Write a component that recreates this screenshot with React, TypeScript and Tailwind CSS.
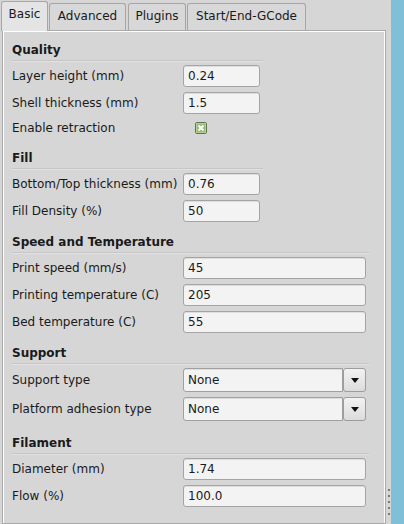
import React from "react";

function TextInput({ value, wide }: { value: string; wide?: boolean }) {
  return (
    <div
      className={`h-[22px] ${wide ? "w-[183px]" : "w-[77px]"} bg-[#f3f3f3] border border-[#a4a4a4] rounded-[3px] flex items-center pl-[4px] shadow-[inset_0_1px_0_#dedede]`}
    >
      {value}
    </div>
  );
}

function Combo({ value }: { value: string }) {
  return (
    <div className="flex h-[24px] w-[183px]">
      <div className="w-[160px] h-full bg-[#f3f3f3] border border-[#a0a0a0] rounded-l-[3px] flex items-center pl-[4px] shadow-[inset_0_1px_0_#dedede]">
        {value}
      </div>
      <div className="w-[23px] h-full border border-[#9c9c9c] rounded-[3px] bg-gradient-to-b from-[#f2f2f2] to-[#dcdcdc] flex items-center justify-center">
        <svg width="8" height="5" viewBox="0 0 8 5">
          <polygon points="0,0 8,0 4,5" fill="#111" />
        </svg>
      </div>
    </div>
  );
}

function Row({ label, children, h = "h-[22px]" }: { label: string; children: React.ReactNode; h?: string }) {
  return (
    <div className={`flex items-center ${h}`}>
      <div className="w-[171px] whitespace-nowrap">{label}</div>
      {children}
    </div>
  );
}

function Section({
  title,
  mt,
  wide,
  children,
}: {
  title: string;
  mt: string;
  wide?: boolean;
  children: React.ReactNode;
}) {
  return (
    <div className={`flex flex-col ${mt}`}>
      <div className="h-[14px] leading-[14px] font-bold">{title}</div>
      <div className={`mt-[3px] h-px bg-[#c6c6c6] shadow-[0_1px_0_#e2e2e2] ${wide ? "w-[357px]" : "w-[251px]"}`} />
      <div className="mt-[4px] flex flex-col gap-[5px]">{children}</div>
    </div>
  );
}

export default function App() {
  return (
    <div className="w-[404px] h-[524px] bg-[#d6d6d6] flex overflow-hidden font-['DejaVu_Sans',sans-serif] text-[12px] text-[#1a1a1a]">
      <div className="w-[386px] flex flex-col">
        {/* Tabs */}
        <div className="h-[30px] flex items-end pl-[1px] relative z-10">
          <div className="w-[47px] h-[30px] mb-[-1px] bg-[#e4e4e4] border border-b-0 border-[#a6a6a6] rounded-t-[3px] flex justify-center pt-[5px] leading-[14px]">
            Basic
          </div>
          <div className="ml-[1px] w-[77px] h-[27px] bg-[#d8d8d8] border border-b-0 border-[#a6a6a6] rounded-t-[3px] flex justify-center pt-[5px] leading-[14px]">
            Advanced
          </div>
          <div className="ml-[2px] w-[58px] h-[27px] bg-[#d8d8d8] border border-b-0 border-[#a6a6a6] rounded-t-[3px] flex justify-center pt-[5px] leading-[14px]">
            Plugins
          </div>
          <div className="ml-[1px] w-[119px] h-[27px] bg-[#d8d8d8] border border-b-0 border-[#a6a6a6] rounded-t-[3px] flex justify-center pt-[5px] leading-[14px]">
            Start/End-GCode
          </div>
        </div>
        {/* Panel */}
        <div className="ml-[2px] flex-1 border border-[#aaaaaa] shadow-[inset_1px_1px_0_#ffffff,inset_-1px_0_0_#ffffff] pl-[9px] pt-[12px] flex flex-col">
          <Section title="Quality" mt="mt-0">
            <Row label="Layer height (mm)">
              <TextInput value="0.24" />
            </Row>
            <Row label="Shell thickness (mm)">
              <TextInput value="1.5" />
            </Row>
            <Row label="Enable retraction" h="h-[18px]">
              <div className="ml-[12px] w-[12px] h-[12px]">
                <svg width="12" height="12" viewBox="0 0 12 12">
                  <rect x="0.5" y="0.5" width="11" height="11" rx="1.5" fill="#98ba73" stroke="#5f7550" />
                  <rect x="1.5" y="1.5" width="9" height="9" fill="none" stroke="#b5d296" strokeWidth="1" />
                  <path d="M3.5 3.5 L8.5 8.5 M8.5 3.5 L3.5 8.5" stroke="#ffffff" strokeWidth="2" />
                </svg>
              </div>
            </Row>
          </Section>
          <Section title="Fill" mt="mt-[14px]">
            <Row label="Bottom/Top thickness (mm)">
              <TextInput value="0.76" />
            </Row>
            <Row label="Fill Density (%)">
              <TextInput value="50" />
            </Row>
          </Section>
          <Section title="Speed and Temperature" mt="mt-[13px]" wide>
            <Row label="Print speed (mm/s)">
              <TextInput value="45" wide />
            </Row>
            <Row label="Printing temperature (C)">
              <TextInput value="205" wide />
            </Row>
            <Row label="Bed temperature (C)">
              <TextInput value="55" wide />
            </Row>
          </Section>
          <Section title="Support" mt="mt-[13px]" wide>
            <Row label="Support type" h="h-[24px]">
              <Combo value="None" />
            </Row>
            <Row label="Platform adhesion type" h="h-[24px]">
              <Combo value="None" />
            </Row>
          </Section>
          <Section title="Filament" mt="mt-[15px]" wide>
            <Row label="Diameter (mm)">
              <TextInput value="1.74" wide />
            </Row>
            <Row label="Flow (%)">
              <TextInput value="100.0" wide />
            </Row>
          </Section>
        </div>
      </div>
      {/* Splitter */}
      <div className="w-[5px] relative">
        <div className="absolute left-[2px] top-[489px] flex flex-col gap-[4px]">
          <div className="w-[2px] h-[2px] bg-[#7a7a7a]" />
          <div className="w-[2px] h-[2px] bg-[#7a7a7a]" />
          <div className="w-[2px] h-[2px] bg-[#7a7a7a]" />
          <div className="w-[2px] h-[2px] bg-[#7a7a7a]" />
          <div className="w-[2px] h-[2px] bg-[#7a7a7a]" />
        </div>
      </div>
      <div className="w-[13px] bg-[#80bfd8]" />
    </div>
  );
}
